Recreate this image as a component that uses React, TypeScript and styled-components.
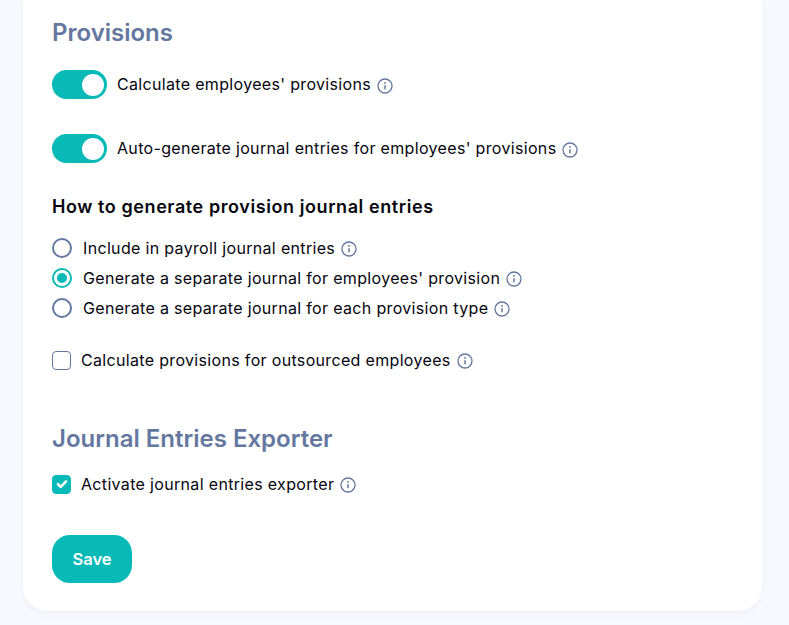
import React from "react";
import styled, { createGlobalStyle } from "styled-components";

const Global = createGlobalStyle`
  html, body { margin: 0; padding: 0; height: 625px; overflow: hidden; background: #f8f9fe; }
  body { font-family: Inter, "Liberation Sans", sans-serif; }
`;

const Page = styled.div`
  padding: 0 27px 14px 23px;
`;

const Card = styled.main`
  box-sizing: border-box;
  height: 611px;
  background: #fff;
  border-radius: 0 0 24px 24px;
  box-shadow: 0 2px 6px rgba(100, 120, 160, 0.07);
  padding: 18px 29px 28px;
  display: flex;
  flex-direction: column;
`;

const Heading = styled.h2<{ $top?: number }>`
  margin: ${(p) => p.$top ?? 0}px 0 0;
  font-size: 24px;
  line-height: 30px;
  font-weight: 600;
  color: #64779f;
`;

const ToggleRow = styled.label<{ $top: number }>`
  display: flex;
  align-items: center;
  margin-top: ${(p) => p.$top}px;
`;

const Toggle = styled.span`
  box-sizing: border-box;
  width: 55px;
  height: 29px;
  margin-right: 10px;
  border-radius: 15px;
  background: #08bab7;
  display: flex;
  align-items: center;
  justify-content: flex-end;
  padding-right: 3px;
  &::after {
    content: "";
    width: 22px;
    height: 22px;
    border-radius: 50%;
    background: #fff;
  }
`;

const Label = styled.span`
  font-size: 16px;
  line-height: 24px;
  color: #05050f;
  letter-spacing: 0.33px;
`;

const ToggleLabel = styled(Label)`
  padding-bottom: 2px;
`;

const Info = styled.svg`
  width: 16px;
  height: 16px;
  margin-left: 6px;
  flex: none;
  position: relative;
  top: 1px;
`;

const InfoIcon = () => (
  <Info viewBox="0 0 16 16" fill="none" stroke="#64779f">
    <circle cx="8" cy="8" r="7" strokeWidth="1.3" />
    <path d="M8 7.2v4" strokeWidth="1.5" />
    <circle cx="8" cy="4.9" r="0.95" fill="#64779f" stroke="none" />
  </Info>
);

const Subheading = styled.h3`
  margin: 31px 0 0;
  font-size: 18px;
  line-height: 26px;
  font-weight: 600;
  color: #05050f;
  letter-spacing: 0.58px;
`;

const RadioGroup = styled.div`
  display: flex;
  flex-direction: column;
  margin-top: 16px;
  gap: 6px;
`;

const Row = styled.label<{ $top?: number }>`
  display: flex;
  align-items: center;
  margin-top: ${(p) => p.$top ?? 0}px;
`;

const Radio = styled.span<{ $checked?: boolean }>`
  box-sizing: border-box;
  width: 20px;
  height: 20px;
  border-radius: 50%;
  margin-right: 11px;
  border: 2px solid ${(p) => (p.$checked ? "#08bab7" : "#64779f")};
  display: flex;
  align-items: center;
  justify-content: center;
  &::after {
    content: "";
    display: ${(p) => (p.$checked ? "block" : "none")};
    width: 10px;
    height: 10px;
    border-radius: 50%;
    background: #08bab7;
  }
`;

const Checkbox = styled.span<{ $checked?: boolean }>`
  box-sizing: border-box;
  width: 19px;
  height: 19px;
  border-radius: 4px;
  margin-right: 10px;
  border: 1px solid ${(p) => (p.$checked ? "#08bab7" : "#64779f")};
  background: ${(p) => (p.$checked ? "#08bab7" : "#fff")};
  display: flex;
  align-items: center;
  justify-content: center;
`;

const SaveButton = styled.button`
  width: 80px;
  height: 48px;
  margin-top: 39px;
  border: none;
  border-radius: 18px;
  background: #08bab7;
  color: #fff;
  font: 600 16.5px Inter, "Liberation Sans", sans-serif;
`;

export default function App() {
  return (
    <Page>
      <Global />
      <Card>
        <Heading>Provisions</Heading>
        <ToggleRow $top={22}>
          <Toggle />
          <ToggleLabel>Calculate employees' provisions</ToggleLabel>
          <InfoIcon />
        </ToggleRow>
        <ToggleRow $top={35}>
          <Toggle />
          <ToggleLabel>Auto-generate journal entries for employees' provisions</ToggleLabel>
          <InfoIcon />
        </ToggleRow>
        <Subheading>How to generate provision journal entries</Subheading>
        <RadioGroup>
          <Row>
            <Radio />
            <Label>Include in payroll journal entries</Label>
            <InfoIcon />
          </Row>
          <Row>
            <Radio $checked />
            <Label>Generate a separate journal for employees' provision</Label>
            <InfoIcon />
          </Row>
          <Row>
            <Radio />
            <Label>Generate a separate journal for each provision type</Label>
            <InfoIcon />
          </Row>
        </RadioGroup>
        <Row $top={28}>
          <Checkbox />
          <Label>Calculate provisions for outsourced employees</Label>
          <InfoIcon />
        </Row>
        <Heading $top={52}>Journal Entries Exporter</Heading>
        <Row $top={18}>
          <Checkbox $checked>
            <svg width="12" height="10" viewBox="0 0 12 10" fill="none">
              <path d="M2 5.2l2.7 2.6L10 2.4" stroke="#fff" strokeWidth="2.6" strokeLinecap="round" strokeLinejoin="round" />
            </svg>
          </Checkbox>
          <Label>Activate journal entries exporter</Label>
          <InfoIcon />
        </Row>
        <SaveButton>Save</SaveButton>
      </Card>
    </Page>
  );
}
